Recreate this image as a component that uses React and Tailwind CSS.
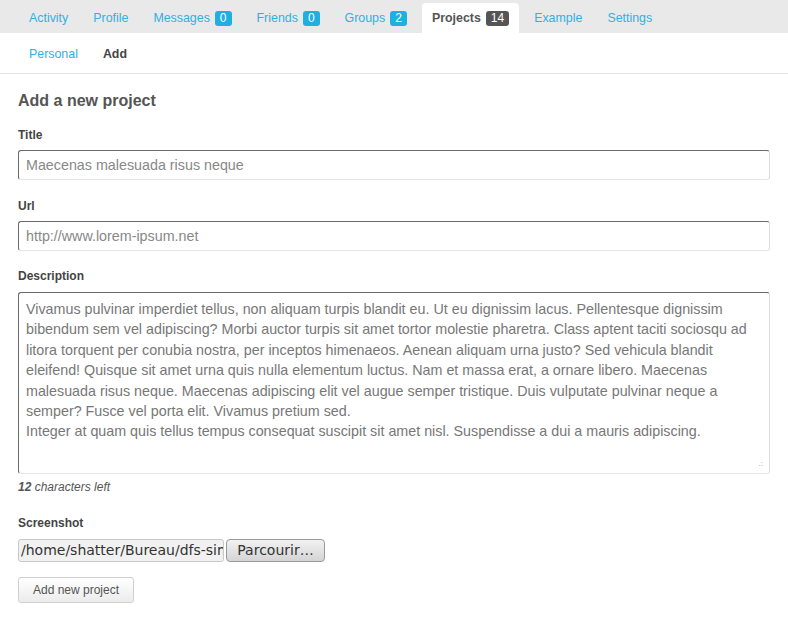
import React from "react";

const tabs = [
  { label: "Activity" },
  { label: "Profile" },
  { label: "Messages", badge: "0" },
  { label: "Friends", badge: "0" },
  { label: "Groups", badge: "2" },
  { label: "Projects", badge: "14", active: true },
  { label: "Example" },
  { label: "Settings" },
];

const description =
  "Vivamus pulvinar imperdiet tellus, non aliquam turpis blandit eu. Ut eu dignissim lacus. Pellentesque dignissim bibendum sem vel adipiscing? Morbi auctor turpis sit amet tortor molestie pharetra. Class aptent taciti sociosqu ad litora torquent per conubia nostra, per inceptos himenaeos. Aenean aliquam urna justo? Sed vehicula blandit eleifend! Quisque sit amet urna quis nulla elementum luctus. Nam et massa erat, a ornare libero. Maecenas malesuada risus neque. Maecenas adipiscing elit vel augue semper tristique. Duis vulputate pulvinar neque a semper? Fusce vel porta elit. Vivamus pretium sed.\nInteger at quam quis tellus tempus consequat suscipit sit amet nisl. Suspendisse a dui a mauris adipiscing.";

// inset look of the old gtk text fields
const fieldClass =
  "w-full rounded-[3px] border border-t-[#6b6b6b] border-l-[#6b6b6b] border-r-[#dcdcdc] border-b-[#e6e6e6] bg-white px-[7px] text-[14.3px] text-[#777] outline-none";

const Label = ({ children }) => (
  <div className="text-[12px] font-bold text-[#444] leading-[16px]">{children}</div>
);

export default function App() {
  return (
    <div className="min-h-[617px] bg-white font-['Liberation_Sans',Arial,sans-serif]">
      {/* main tabs */}
      <div className="flex h-[33px] items-end gap-[5px] bg-[#e9e9e9] pl-[19px]">
        {tabs.map((t) => (
          <div
            key={t.label}
            className={
              t.active
                ? "flex h-[30px] items-center rounded-t-[4px] bg-white px-[10px] text-[12.4px] font-bold text-[#555]"
                : "flex h-[30px] items-center px-[10px] text-[12.4px] text-[#2eb1e2]"
            }
          >
            {t.label}
            {t.badge && (
              <span
                className={
                  "ml-[5px] rounded-[3px] px-[5px] text-[12px] leading-[15px] font-normal text-white " +
                  (t.active ? "bg-[#555]" : "bg-[#1eb0e0]")
                }
              >
                {t.badge}
              </span>
            )}
          </div>
        ))}
      </div>

      {/* sub tabs */}
      <div className="flex h-[41px] items-center gap-[25px] border-b border-[#e4e4e4] pl-[29px] pt-[2px] text-[12.4px]">
        <span className="text-[#2eb1e2]">Personal</span>
        <span className="font-bold text-[#444]">Add</span>
      </div>

      <div className="px-[18px] pt-[17px]">
        <h2 className="text-[16px] font-bold text-[#555] leading-[20px]">Add a new project</h2>

        <div className="mt-[16px]">
          <Label>Title</Label>
          <input
            className={fieldClass + " mt-[7px] h-[30px] placeholder:text-[#888]"}
            placeholder="Maecenas malesuada risus neque"
          />
        </div>

        <div className="mt-[18px]">
          <Label>Url</Label>
          <input
            className={fieldClass + " mt-[7px] h-[30px] placeholder:text-[#888]"}
            placeholder="http://www.lorem-ipsum.net"
          />
        </div>

        <div className="mt-[17px]">
          <Label>Description</Label>
          <div className="relative mt-[8px]">
            <textarea
              className={fieldClass + " block h-[182px] resize-none py-[6px] leading-[20.4px]"}
              defaultValue={description}
            />
            <span className="absolute bottom-[6px] right-[7px] text-[8px] leading-none text-[#999]">.:</span>
          </div>
          <div className="mt-[4px] text-[12px] italic text-[#555]">
            <b>12</b> characters left
          </div>
        </div>

        <div className="mt-[19px]">
          <Label>Screenshot</Label>
          <div className="mt-[8px] flex items-center gap-[2px]">
            <div className="flex h-[23px] w-[206px] items-center overflow-hidden whitespace-nowrap rounded-[3px] border border-[#c8c8c8] bg-[#f1f1f1] px-[2px] font-['DejaVu_Sans',sans-serif] text-[14px] text-[#333]">
              /home/shatter/Bureau/dfs-simple.png
            </div>
            <button className="h-[23px] w-[99px] rounded-[4px] border border-[#9a9a9a] bg-gradient-to-b from-[#f2f2f2] to-[#d4d4d4] font-['DejaVu_Sans',sans-serif] text-[14px] text-[#333]">
              Parcourir…
            </button>
          </div>
        </div>

        <button className="mt-[15px] h-[26px] w-[116px] rounded-[3px] border border-[#cfcfcf] bg-gradient-to-b from-white to-[#ececec] text-[12px] text-[#555]">
          Add new project
        </button>
      </div>
    </div>
  );
}
